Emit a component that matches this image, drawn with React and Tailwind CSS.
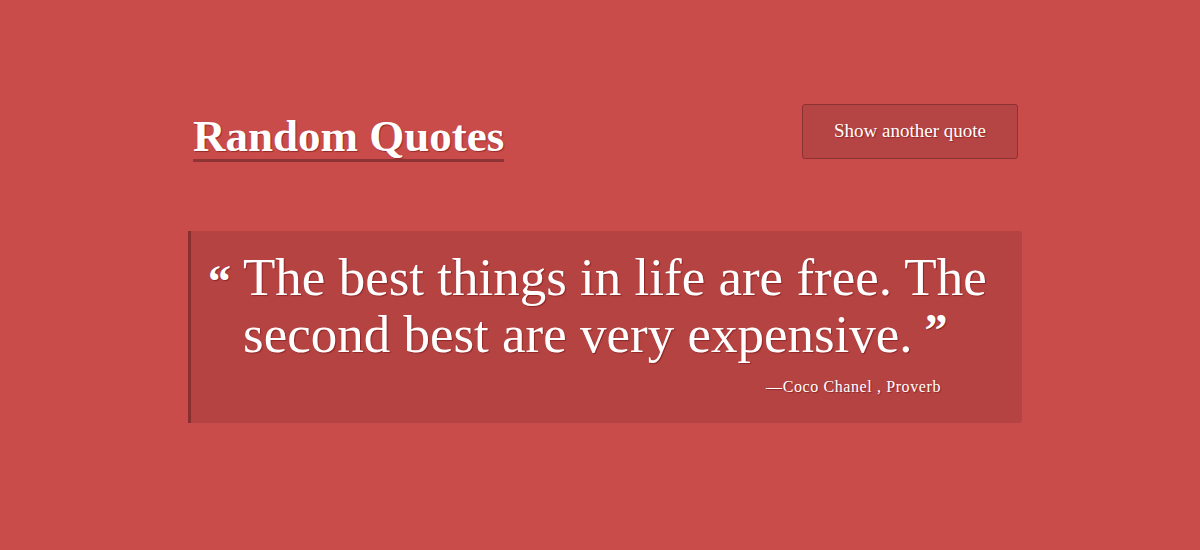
import React from "react";

const serif = { fontFamily: '"Liberation Serif", "DejaVu Serif", serif' };

export default function App() {
  const quote = {
    text: "The best things in life are free. The second best are very expensive.",
    author: "Coco Chanel",
    source: "Proverb",
  };

  return (
    <div className="min-h-[550px] bg-[#c94c4a] pt-[103px] text-white" style={serif}>
      <div className="ml-[188px] w-[834px]">
        <header className="flex items-start justify-between">
          <h1 className="ml-[5px] mt-[12px] border-b-[3px] border-[#8f3434] pb-[2px] text-[45px] font-bold leading-[42px] [text-shadow:1px_1px_1px_rgba(120,20,20,0.6)]">
            Random Quotes
          </h1>
          <button className="mr-[4px] mt-px h-[55px] w-[216px] rounded-[3px] border border-[#8c3232] bg-[#b54444] text-[19px] [text-shadow:1px_1px_1px_rgba(120,20,20,0.6)]">
            Show another quote
          </button>
        </header>

        <blockquote className="mt-[69px] rounded-r-[3px] border-l-[3px] border-[#8a2f2f] bg-[#b44342] pb-[24px] pl-[17px] pr-[30px] pt-[18px] [text-shadow:1px_1px_1px_rgba(120,20,20,0.6)]">
          <p className="flex text-[53px] leading-[57px]">
            <span className="mr-[12px] mt-[10px] text-[46px] font-bold leading-none">“</span>
            <span>
              {quote.text}
              <span className="ml-[12px] inline-block align-top text-[46px] font-bold leading-[50px]">”</span>
            </span>
          </p>
          <footer className="mt-[12px] pr-[51px] text-right text-[16px] tracking-[0.6px]">
            —{quote.author} , {quote.source}
          </footer>
        </blockquote>
      </div>
    </div>
  );
}
